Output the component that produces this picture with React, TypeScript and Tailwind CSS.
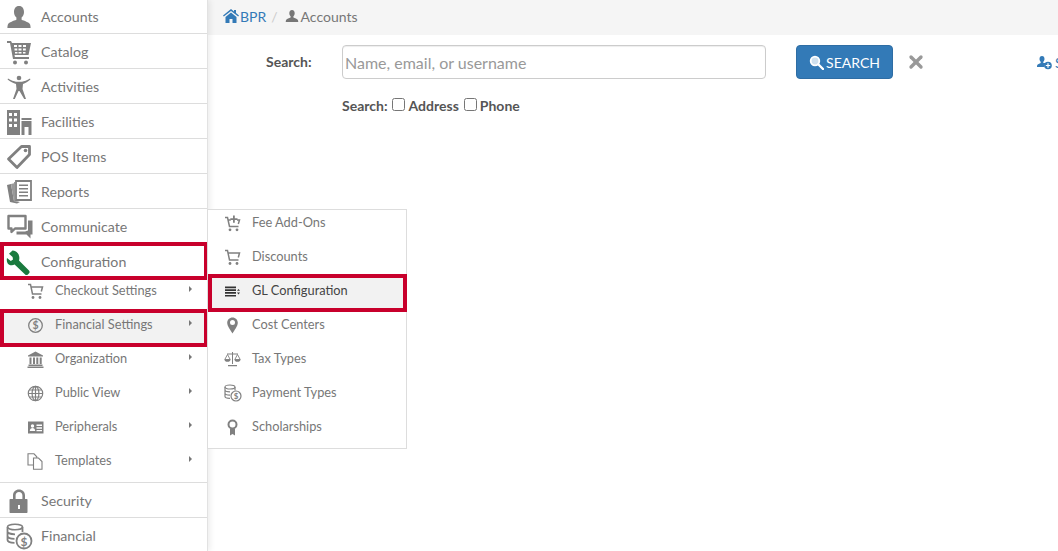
import type { ReactNode } from "react";
import { X } from "lucide-react";

const GREY = "#808080";

function Ico({ size, box, children }: { size: number; box: number; children: ReactNode }) {
  return (
    <svg width={size} height={size} viewBox={`0 0 ${box} ${box}`} fill={GREY} className="shrink-0">
      {children}
    </svg>
  );
}

const PersonPath = "M13 2c-3.400 0-5 2.700-5 6 0 2.400 1 4.400 2.400 5.600v2.200c-2.500 1-7.400 2.600-8.400 4.400-.5 1-.6 2.800-.6 3.800h23.200c0-1-.1-2.800-.6-3.800-1-1.800-5.900-3.400-8.400-4.400v-2.200C17 12.400 18 10.400 18 8c0-3.300-1.600-6-5-6z";

const icons: Record<string, ReactNode> = {
  accounts: (
    <Ico size={26} box={26}>
      <path d={PersonPath} />
    </Ico>
  ),
  catalog: (
    <Ico size={26} box={26}>
      <path d="M1 2h4l1 2h19l-2.500 12H8.500l.4 2H23v2H7L4 4H1z" />
      <path d="M8 6v2h3V6zm4.500 0v2h3V6zm4.500 0v2h3V6zM8.500 9.500v2h2.800v-2zm4 0v2h3v-2zm4.500 0v2h2.800v-2zM9 13v1.500h2.500V13zm3.500 0v1.500h3V13zm4.500 0v1.500h2.500V13z" fill="#fff" />
      <circle cx="9" cy="23.500" r="2" />
      <circle cx="20" cy="23.500" r="2" />
    </Ico>
  ),
  activities: (
    <Ico size={26} box={26}>
      <circle cx="13" cy="4" r="2.300" />
      <path d="M2 4.500c3 1.800 6 3 8 3.200h6c2-.2 5-1.400 8-3.200l.4.900c-2.400 2.200-5 3.800-7.400 4.600l-.5 5 3.500 10h-1.800L13.500 17h-1L8.800 25H7l3.500-10-.5-5C7.600 9.200 4 7.600 1.600 5.400z" />
    </Ico>
  ),
  facilities: (
    <Ico size={26} box={26}>
      <path d="M1 1h13v25H1z" />
      <path d="M3 4h3v3H3zm5 0h3v3H8zM3 9.500h3v3H3zm5 0h3v3H8zM3 15h3v3H3zm5 0h3v3H8z" fill="#fff" />
      <path d="M15.500 9h10v2h-10zM15.500 12h10v14h-3v-8h-4v8h-3z" />
    </Ico>
  ),
  pos: (
    <Ico size={26} box={26}>
      <path d="M15.500 2.500h8v8L11 23.500 2.500 15z" fill="none" stroke={GREY} strokeWidth="2.800" strokeLinejoin="round" />
      <circle cx="19.500" cy="6.500" r="1.800" />
    </Ico>
  ),
  reports: (
    <Ico size={26} box={26}>
      <path d="M1 6l4-1 3 17 6 1-3 1.500-7-1.500z" />
      <path d="M8 3h1v18l4 1.200-5 .3-3-17.500 3-.7z" fill="#999" />
      <path d="M10 2h15v19H10z" fill="#fff" stroke={GREY} strokeWidth="1.800" />
      <path d="M13 5.500h9v1.500h-9zM13 9h9v1.500h-9zM13 12.500h9V14h-9zM13 16h9v1.500h-9z" />
    </Ico>
  ),
  communicate: (
    <Ico size={28} box={28}>
      <path d="M2.500 3h17v12.500H9L5.500 19v-3.500h-3z" fill="none" stroke={GREY} strokeWidth="2.400" strokeLinejoin="round" />
      <path d="M22 7.500h4.500v14h-2v4l-4-4H10.500v-3H19l3-1z" />
    </Ico>
  ),
  wrench: (
    <Ico size={26} box={26}>
      <path
        d="M6.500 2.500 3 5.800l3.600 3.200.4 2.500-2.200 1.600-3.800-3c-.6 2.400 0 5 1.800 6.300 1.800 1.200 4 1.200 5.800.2l10.500 10c.8.700 2 .7 2.800 0l1.200-1.300c.7-.8.7-2-.1-2.800L13 12.500c.7-2.500.5-5-1.200-7.200C10.300 3.400 8.400 2.400 6.500 2.500z"
        fill="#1a7a3e"
        transform="translate(0 -1)"
      />
    </Ico>
  ),
  security: (
    <Ico size={26} box={26}>
      <path d="M7 11V7.500C7 4 9.500 1.500 13 1.500S19 4 19 7.500V11h-2.600V7.500c0-2-1.400-3.400-3.400-3.400s-3.400 1.400-3.400 3.400V11z" />
      <path d="M5 11h16c.8 0 1 .4 1 1v12c0 .8-.4 1-1 1H5c-.8 0-1-.4-1-1V12c0-.8.4-1 1-1z" transform="translate(-.5 0)" />
      <path d="M12 17h2v4h-2z" fill="#fff" />
    </Ico>
  ),
  financial: (
    <Ico size={27} box={27}>
      <ellipse cx="9" cy="4" rx="7.500" ry="2.800" fill="none" stroke={GREY} strokeWidth="1.600" />
      <path d="M1.500 4v13c0 1.500 3 2.800 7 2.800M16.500 4v5M1.500 8.500c0 1.500 3.300 2.800 7.500 2.800M1.500 13c0 1.500 3 2.800 7 2.800" fill="none" stroke={GREY} strokeWidth="1.800" />
      <circle cx="18" cy="18" r="7.500" fill="#fff" stroke={GREY} strokeWidth="1.800" />
      <text x="18" y="22.500" textAnchor="middle" fontSize="12" fontWeight="700" fontFamily="Lato, sans-serif" fill={GREY}>$</text>
    </Ico>
  ),
  cartLine: (
    <Ico size={17} box={17}>
      <path d="M1 1.500h2.500L5.500 11h9M3.800 4h11.700l-1.200 4.500" fill="none" stroke={GREY} strokeWidth="1.500" />
      <circle cx="6" cy="14.500" r="1.400" />
      <circle cx="13" cy="14.500" r="1.400" />
    </Ico>
  ),
  cartPlus: (
    <Ico size={17} box={17}>
      <path d="M1 2.500h2.500L5.500 11.500h9M3.800 5h3M13 5h2.500l-1.200 4" fill="none" stroke={GREY} strokeWidth="1.500" />
      <path d="M9 .5h1.800v2.700h2.700V5h-2.700v2.700H9V5H6.300V3.200H9z" />
      <circle cx="6" cy="14.800" r="1.400" />
      <circle cx="13" cy="14.800" r="1.400" />
    </Ico>
  ),
  dollar: (
    <Ico size={17} box={17}>
      <circle cx="8.500" cy="8.500" r="6.800" fill="none" stroke={GREY} strokeWidth="1.300" />
      <text x="8.500" y="12.300" textAnchor="middle" fontSize="10.500" fontWeight="700" fontFamily="Lato, sans-serif" fill={GREY}>$</text>
    </Ico>
  ),
  bank: (
    <Ico size={17} box={17}>
      <path d="M8.500 .5 16 4.500v1H1v-1z" />
      <path d="M2.500 6.500h2v6.500h-2zM6 6.500h2v6.500H6zM9.300 6.500h2v6.500h-2zM12.700 6.500h2v6.500h-2zM1.500 13.500h14V15h-14zM.5 15.500h16V17H.5z" />
    </Ico>
  ),
  globe: (
    <Ico size={17} box={17}>
      <g fill="none" stroke={GREY} strokeWidth="1.200">
        <circle cx="8.500" cy="8.500" r="7.200" />
        <ellipse cx="8.500" cy="8.500" rx="3.400" ry="7.200" />
        <path d="M8.500 1.300v14.400M1.300 8.500h14.400M2.300 5h12.400M2.300 12h12.400" />
      </g>
    </Ico>
  ),
  idCard: (
    <Ico size={17} box={17}>
      <path d="M1 2.500h15.500v12H1z" />
      <circle cx="5.500" cy="7" r="1.700" fill="#fff" />
      <path d="M2.800 12c0-2 1.200-3 2.700-3s2.700 1 2.700 3zM9.500 5.500h5.500V7H9.500zM9.500 8.300h5.500v1.400H9.500zM9.500 11h5.500v1.300H9.500z" fill="#fff" />
    </Ico>
  ),
  files: (
    <Ico size={17} box={17}>
      <g fill="#fff" stroke={GREY} strokeWidth="1.100">
        <path d="M1 .8h6l2.800 3V12H1z" />
        <path d="M6.500 5h5l3.500 3.500v7.800H6.500z" />
      </g>
    </Ico>
  ),
  list: (
    <Ico size={17} box={17}>
      <path d="M1 3.500h11v1.700H1zM1 6.300h11V8H1zM1 9.100h11v1.700H1zM1 11.900h11v1.700H1z" fill="#333" />
      <path d="M14.500 6 16 7.800h-3zM14.500 11.500 16 9.500h-3z" fill="#333" />
    </Ico>
  ),
  pin: (
    <Ico size={17} box={17}>
      <path d="M8.500 .5c-3 0-5.300 2.300-5.300 5.300 0 3.500 3.500 7.500 5.300 10.700 1.800-3.200 5.300-7.200 5.300-10.700C13.800 2.800 11.500.5 8.500.5zm0 7.500a2.500 2.500 0 1 1 0-5 2.500 2.500 0 0 1 0 5z" />
    </Ico>
  ),
  scale: (
    <Ico size={17} box={17}>
      <path d="M8 1h1v12H8zM3 2.500h11v1H3zM4 14h9v1.300H4z" />
      <path d="M3.500 3.500.8 8.500h5.400zM13.500 3.500l-2.700 5h5.400z" fill="none" stroke={GREY} strokeWidth=".9" />
      <path d="M.5 8.500h6c0 1.500-1.300 2.300-3 2.300s-3-.8-3-2.300zM10.500 8.500h6c0 1.500-1.300 2.300-3 2.300s-3-.8-3-2.300z" />
    </Ico>
  ),
  payment: (
    <Ico size={18} box={18}>
      <ellipse cx="6" cy="3" rx="5" ry="2" fill="none" stroke={GREY} strokeWidth="1.100" />
      <path d="M1 3v9.500c0 1 2.200 1.800 5 1.800M11 3v3.500M1 6c0 1 2.200 1.800 5 1.800M1 9.300c0 1 2.200 1.800 5 1.800" fill="none" stroke={GREY} strokeWidth="1.200" />
      <circle cx="12" cy="12" r="5" fill="#fff" stroke={GREY} strokeWidth="1.200" />
      <text x="12" y="15" textAnchor="middle" fontSize="8" fontWeight="700" fontFamily="Lato, sans-serif" fill={GREY}>$</text>
    </Ico>
  ),
  ribbon: (
    <Ico size={17} box={17}>
      <circle cx="8.500" cy="5.500" r="4" fill="none" stroke={GREY} strokeWidth="2" />
      <path d="M6 9.500h5V16.500L8.500 15 6 16.500z" />
    </Ico>
  ),
};

const topRows = [
  { icon: "accounts", label: "Accounts" },
  { icon: "catalog", label: "Catalog" },
  { icon: "activities", label: "Activities" },
  { icon: "facilities", label: "Facilities" },
  { icon: "pos", label: "POS Items" },
  { icon: "reports", label: "Reports" },
  { icon: "communicate", label: "Communicate" },
];

const subRows = [
  { icon: "cartLine", label: "Checkout Settings" },
  { icon: "dollar", label: "Financial Settings", active: true },
  { icon: "bank", label: "Organization" },
  { icon: "globe", label: "Public View" },
  { icon: "idCard", label: "Peripherals" },
  { icon: "files", label: "Templates" },
];

const flyout = [
  { icon: "cartPlus", label: "Fee Add-Ons" },
  { icon: "cartLine", label: "Discounts" },
  { icon: "list", label: "GL Configuration", active: true },
  { icon: "pin", label: "Cost Centers" },
  { icon: "scale", label: "Tax Types" },
  { icon: "payment", label: "Payment Types" },
  { icon: "ribbon", label: "Scholarships" },
];

function NavRow({ icon, label, noBorder }: { icon: string; label: string; noBorder?: boolean }) {
  return (
    <div className={`h-[35px] flex items-center pl-[6px] text-[14.2px] text-[#777] ${noBorder ? "pt-[1px]" : "pt-[2px] border-b border-[#ddd]"}`}>
      <div className="w-[35px] shrink-0 flex items-center">{icons[icon]}</div>
      <span>{label}</span>
    </div>
  );
}

export default function App() {
  return (
    <div className="relative flex w-[1058px] h-[551px] overflow-hidden bg-white font-['Lato','Liberation_Sans',sans-serif]">
      <aside className="relative z-10 w-[208px] shrink-0 bg-white border-r border-[#e2e2e2] shadow-[2px_0_6px_rgba(0,0,0,0.08)]">
        <div className="-mt-px">
          {topRows.map((row) => (
            <NavRow key={row.label} icon={row.icon} label={row.label} />
          ))}
          <div className="relative">
            <NavRow icon="wrench" label="Configuration" noBorder />
            <div className="absolute left-0 right-[-1px] top-[-2px] bottom-[-1px] border-[4px] border-[#c8002c] pointer-events-none" />
          </div>
          <div className="-mt-[5px] pb-[4px] border-b border-[#ddd]">
            {subRows.map((row) => (
              <div
                key={row.label}
                className="relative h-[34px] flex items-center pl-[27px] pr-[15px] text-[12.8px] text-[#777]"
              >
                {row.active && (
                  <div className="absolute -z-10 left-0 right-[-1px] top-[1px] bottom-[-5px] bg-[#f2f2f2] border-[4px] border-[#c8002c]" />
                )}
                <div className="w-[28px] shrink-0 flex items-center">{icons[row.icon]}</div>
                <span className="flex-1">{row.label}</span>
                <span className="mb-[4px] w-0 h-0 border-y-[3.5px] border-y-transparent border-l-[3.5px] border-l-[#777]" />
              </div>
            ))}
          </div>
          <NavRow icon="security" label="Security" />
          <NavRow icon="financial" label="Financial" noBorder />
        </div>
      </aside>

      <div className="absolute z-20 left-[207px] top-[209px] w-[200px] h-[240px] bg-white border border-[#ddd]">
        <div className="-mt-[4px]">
          {flyout.map((row) => (
            <div
              key={row.label}
              className={`relative h-[34px] flex items-center pl-[16px] text-[12.8px] ${row.active ? "text-[#444]" : "text-[#777]"}`}
            >
              {row.active && (
                <div className="absolute -z-10 left-0 right-[-1px] top-0 bottom-[-4px] bg-[#f2f2f2] border-[4px] border-[#c8002c]" />
              )}
              <div className="w-[28px] shrink-0 flex items-center">{icons[row.icon]}</div>
              <span>{row.label}</span>
            </div>
          ))}
        </div>
      </div>

      <main className="flex-1 min-w-0 overflow-hidden">
        <div className="h-[35px] bg-[#f5f5f5] flex items-center pl-[15px] pb-[3px] text-[14px]">
          <svg width="16" height="14" viewBox="0 0 16 14" fill="#337ab7" className="mr-[1px]">
            <path d="M8 0 0 6.500l.8 1L8 2l7.200 5.500.8-1L13 4V1h-2v1.400zM2.500 8 8 3.500 13.500 8v6H9.500v-4h-3v4h-4z" />
          </svg>
          <span className="text-[#337ab7]">BPR</span>
          <span className="text-[#ccc] ml-[5px] mr-[7px]">/</span>
          <svg width="14" height="14" viewBox="0 0 26 26" fill="#777" className="mr-[2px]">
            <path d={PersonPath} />
          </svg>
          <span className="text-[#777]">Accounts</span>
        </div>

        <div className="flex items-start pt-[10px] pl-[58px] w-[900px]">
          <label className="w-[76px] shrink-0 h-[34px] flex items-center pb-[2px] text-[14px] font-bold text-[#555]">Search:</label>
          <div className="w-[424px] shrink-0 h-[34px] border border-[#ccc] rounded-[4px] flex items-center pl-[2px] pt-[1px] text-[16px] text-[#999] shadow-[inset_0_1px_1px_rgba(0,0,0,0.07)]">
            Name, email, or username
          </div>
          <button className="ml-[30px] shrink-0 w-[97px] h-[34px] rounded-[4px] bg-[#337ab7] border border-[#2e6da4] text-white text-[14px] flex items-center justify-center gap-[2px]">
            <svg width="15" height="15" viewBox="0 0 15 15" className="shrink-0">
              <circle cx="6" cy="6" r="4.300" fill="#cfe0ee" stroke="#fff" strokeWidth="1.800" />
              <path d="M9.500 9.500 14 14" stroke="#fff" strokeWidth="2.400" strokeLinecap="round" />
            </svg>
            SEARCH
          </button>
          <div className="ml-[13px] shrink-0 h-[34px] flex items-center">
            <X size={20} strokeWidth={4} color="#999" />
          </div>
          <div className="ml-[111px] shrink-0 h-[34px] flex items-center text-[14px] text-[#337ab7] whitespace-nowrap">
            <svg width="15" height="15" viewBox="0 0 15 15" fill="#337ab7" className="mr-[3px] shrink-0">
              <path d="M5 1c-1.700 0-2.500 1.300-2.500 3 0 1.200.5 2.200 1.200 2.800V8C2.500 8.500.5 9.300.2 10.200 0 10.800 0 12 0 12h7.500c0-2.500 1-3.500 1-4L6.300 8V6.800C7 6.200 7.500 5.200 7.500 4 7.500 2.300 6.700 1 5 1z" />
              <circle cx="11" cy="10.500" r="3.800" />
              <path d="M10.400 8.300h1.200v1.600h1.600v1.200h-1.600v1.600h-1.200v-1.600H8.800V9.900h1.600z" fill="#fff" />
            </svg>
            Search
          </div>
        </div>

        <div className="flex items-center mt-[16px] ml-[134px] text-[14px] font-bold text-[#555]">
          <span>Search:</span>
          <input type="checkbox" readOnly className="ml-[4px] mr-[4px] w-[13px] h-[13px] -mt-[3px]" />
          <span>Address</span>
          <input type="checkbox" readOnly className="ml-[5px] mr-[3px] w-[13px] h-[13px] -mt-[3px]" />
          <span>Phone</span>
        </div>
      </main>
    </div>
  );
}
